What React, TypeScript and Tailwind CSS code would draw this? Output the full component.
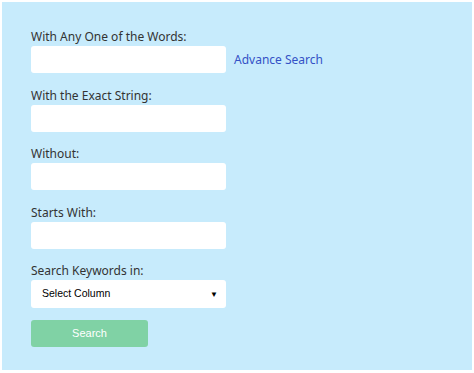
import React from "react";

const fields = ["With Any One of the Words:", "With the Exact String:", "Without:", "Starts With:"];

export default function App() {
  return (
    <div className="w-[474px] h-[373px] bg-white p-[2px]" style={{ fontFamily: '"Noto Sans", "Open Sans", sans-serif' }}>
      <div className="w-[470px] h-[368px] bg-[#c7ebfc] pl-[29px] pt-[26px] flex flex-col">
        {fields.map((f, i) => (
          <div key={f} className="flex flex-col mb-[13.5px]">
            <label className="text-[12px] leading-[18px] text-[#333]">{f}</label>
            <div className="flex items-center">
              <input className="w-[195px] h-[27px] bg-white rounded-[3px] outline-none" />
              {i === 0 && (
                <a href="#" className="ml-[8px] text-[12px] text-[#3451c6]">
                  Advance Search
                </a>
              )}
            </div>
          </div>
        ))}
        <div className="flex flex-col">
          <label className="text-[12px] leading-[18px] text-[#333]">Search Keywords in:</label>
          <div className="w-[195px] h-[28px] bg-white rounded-[3px] flex items-center justify-between pl-[11px] pr-[8px]">
            <span className="text-[10.5px] text-black" style={{ fontFamily: '"Liberation Sans", Arial, sans-serif' }}>
              Select Column
            </span>
            <span className="text-[8px] text-black">▼</span>
          </div>
        </div>
        <button
          className="mt-[12px] w-[117px] h-[27px] rounded-[3px] bg-[#80d2a5] text-white text-[11px]"
          style={{ fontFamily: '"Liberation Sans", Arial, sans-serif' }}
        >
          Search
        </button>
      </div>
    </div>
  );
}
